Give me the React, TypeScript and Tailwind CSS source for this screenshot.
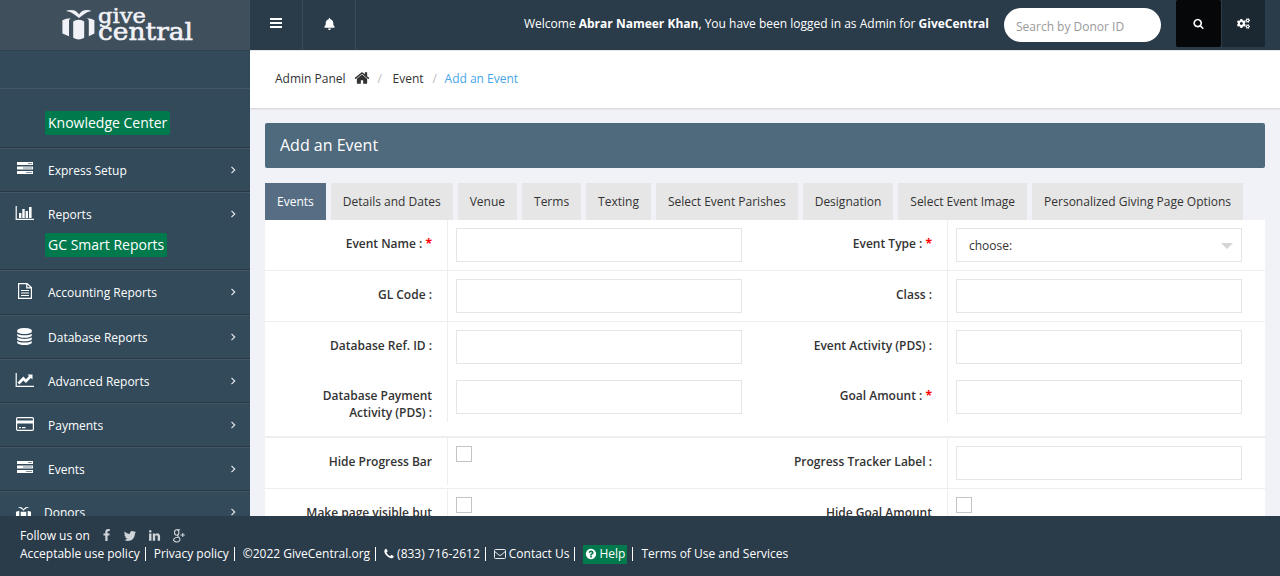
import React from "react";
import { FaCogs, FaBell } from "react-icons/fa";

const P = {
  search:
    "M1216 832q0-185-131.5-316.5t-316.5-131.5-316.5 131.5-131.5 316.5 131.5 316.5 316.5 131.5 316.5-131.5 131.5-316.5zm512 832q0 52-38 90t-90 38q-54 0-90-38l-343-342q-179 124-399 124-143 0-273.5-55.5t-225-150-150-225-55.5-273.5 55.5-273.5 150-225 225-150 273.5-55.5 273.5 55.5 225 150 150 225 55.5 273.5q0 220-124 399l343 343q37 37 37 90z",
  facebook:
    "M1343 12v264h-157q-86 0-116 36t-30 108v189h293l-39 296h-254v759h-306v-759h-255v-296h255v-218q0-186 104-288.5t277-102.5q147 0 228 12z",
  twitter:
    "M1684 408q-67 98-162 167 1 14 1 42 0 130-38 259.5t-115.5 248.5-184.5 210.5-258 146-323 54.5q-271 0-496-145 35 4 78 4 225 0 401-138-105-2-188-64.5t-114-159.5q33 5 61 5 43 0 85-11-112-23-185.500-111.500t-73.500-205.500v-4q68 38 146 41-66-44-105-115t-39-154q0-88 44-163 121 149 294.500 238.500t371.500 99.500q-8-38-8-74 0-134 94.500-228.500t228.500-94.500q140 0 236 102 109-21 205-78-37 115-142 178 93-10 186-50z",
  linkedin:
    "M477 625v991h-330v-991h330zm21-306q1 73-50.5 122t-135.5 49h-2q-82 0-132-49t-50-122q0-74 51.5-122.500t134.500-48.500 133 48.500 51 122.500zm1166 729v568h-329v-530q0-105-40.500-164.500t-126.500-59.500q-63 0-105.500 34.500t-63.500 85.500q-11 30-11 81v553h-329q2-399 2-647t-1-296l-1-48h329v144h-2q20-32 41-56t56.500-52 87-43.500 114.500-15.500q171 0 275 113.500t104 332.500z",
  phone:
    "M1600 1240q0 27-10 70.5t-21 68.5q-21 50-122 106-94 51-186 51-27 0-53-3.5t-57.5-12.5-47-14.5-55.5-20.5-49-18q-98-35-175-83-127-79-264-216t-216-264q-48-77-83-175-3-9-18-49t-20.5-55.5-14.5-47-12.5-57.5-3.5-53q0-92 51-186 56-101 106-122 25-11 68.5-21t70.5-10q14 0 21 3 18 6 53 76 11 19 30 54t35 63.5 31 53.5q3 4 17.5 25t21.5 35.5 7 28.5q0 20-28.5 50t-62 55-62 53-28.5 46q0 9 5 22.5t8.5 20.5 14 24 11.5 19q76 137 174 235t235 174q2 1 19 11.5t24 14 20.5 8.5 22.5 5q18 0 46-28.5t53-62 55-62 50-28.5q14 0 28.5 7t35.5 21.5 25 17.5q25 15 53.5 31t63.5 35 54 30q70 35 76 53 3 7 3 21z",
  home:
    "M1472 992v480q0 26-19 45t-45 19h-384v-384h-256v384h-384q-26 0-45-19t-19-45v-480q0-1 .5-3t.5-3l575-474 575 474q1 2 1 6zm223-69l-62 74q-8 9-21 11h-3q-13 0-21-7l-692-577-692 577q-12 8-24 7-13-2-21-11l-62-74q-8-10-7-23.5t11-21.5l719-599q32-26 76-26t76 26l244 204v-195q0-14 9-23t23-9h192q14 0 23 9t9 23v408l219 182q10 8 11 21.5t-7 23.5z",
  database:
    "M896 768q237 0 443-43t325-127v170q0 69-103 128t-280 93.5-385 34.5-385-34.5-280-93.5-103-128v-170q119 84 325 127t443 43zm0 768q237 0 443-43t325-127v170q0 69-103 128t-280 93.5-385 34.5-385-34.5-280-93.5-103-128v-170q119 84 325 127t443 43zm0-384q237 0 443-43t325-127v170q0 69-103 128t-280 93.5-385 34.5-385-34.5-280-93.5-103-128v-170q119 84 325 127t443 43zm0-1152q208 0 385 34.5t280 93.5 103 128v128q0 69-103 128t-280 93.5-385 34.5-385-34.5-280-93.5-103-128v-128q0-69 103-128t280-93.5 385-34.5z",
  question:
    "M1024 1376v-192q0-14-9-23t-23-9h-192q-14 0-23 9t-9 23v192q0 14 9 23t23 9h192q14 0 23-9t9-23zm256-672q0-88-55.5-163t-138.5-116-170-41q-243 0-371 213-15 24 8 42l132 100q7 6 19 6 16 0 25-12 53-68 86-92 34-24 86-24 48 0 85.5 26t37.5 59q0 38-20 61t-68 45q-63 28-115.5 86.5t-52.5 125.5v36q0 14 9 23t23 9h192q14 0 23-9t9-23q0-19 21.5-49.5t54.5-49.5q32-18 49-28.5t46-35 44.5-48 28-60.5 12.5-81zm384 192q0 209-103 385.5t-279.5 279.5-385.5 103-385.5-103-279.5-279.5-103-385.5 103-385.5 279.5-279.5 385.5-103 385.5 103 279.5 279.5 103 385.5z",
};

function Icon({ d, className }: { d: string; className: string }) {
  return (
    <svg viewBox="0 0 1792 1792" fill="currentColor" className={className}>
      <path d={d} />
    </svg>
  );
}

const TasksIcon = () => (
  <svg width="20" height="16" viewBox="0 0 20 16" fill="none">
    <path fill="#fff" d="M2 1h16v3H2zM2 5.500h16v3H2zM2 10h16v3H2z" />
    <path fill="#7f8f9c" d="M13 2h4v1h-4zM8 6.500h9v1H8zM11 11h6v1h-6z" />
  </svg>
);
const BarsIcon = () => (
  <svg width="20" height="16" viewBox="0 0 20 16" fill="#fff">
    <path d="M.6 1h1.200v12.800H19V15H.6zM4 8h2.400v5H4zM7.300 4h2.400v9H7.300zM10.600 6H13v7h-2.400zM14 2h2.600v11H14z" />
  </svg>
);
const FileIcon = () => (
  <svg width="20" height="18" viewBox="0 0 20 18" fill="none" stroke="#fff" strokeWidth="1.200">
    <path d="M3.600 1.600h8.400l4.400 4v10.800H3.600zM11.800 1.800v4h4.400M6 8.500h8M6 11h8M6 13.500h8" />
  </svg>
);
const LineIcon = () => (
  <svg width="20" height="16" viewBox="0 0 20 16">
    <path fill="#fff" d="M.6 1h1.200v12.800H19V15H.6zM12.500 2.500h5v5l-1.600-1.600-5 5-2.500-2.500-4 4-1.900-1.900 5.900-5.900L10.900 7.200l3.100-3.100z" />
  </svg>
);
const CardIcon = () => (
  <svg width="20" height="16" viewBox="0 0 20 16" fill="none">
    <rect x="1.600" y="1.600" width="16.800" height="12.800" rx="1.200" stroke="#fff" strokeWidth="1.200" />
    <path fill="#fff" d="M2 4.500h16v3H2zM4 11h2v1.200H4zM7 11h3.500v1.200H7z" />
  </svg>
);
const GiftIcon = () => (
  <svg width="17" height="16" viewBox="0 0 34 34" fill="#fff">
    <path d="M5 3q8-3 12 4 4-7 12-4-7 1-12 7Q12 4 5 3zM1 12l7-2v20l-7-3zM26 10l7 2v15l-7 3zM11 12h12v20q-6 3-12 0z" />
  </svg>
);

function Logo() {
  return (
    <svg width="138" height="44" viewBox="0 -4 138 44" fill="#f1f2f7">
      <path d="M4 5Q7 3.600 11.500 4.200 15 4.800 17 8.600 19 4.800 22.500 4.200 27 3.600 29.500 5 25.500 5.400 22 8.200L17 12 12 8.200Q8.500 5.400 4 5z" />
      <path d="M.4 14.200q3.500-2 8.400-2-1.600.8-1.800 2.200v15.800L.4 27.400zM24.800 12.200q4.700 0 7.600 2v13.200l-5.600 2.800V14.400q-.4-1.400-2-2.200zM11.200 15.400q1.800-1.600 5.500-1.600t5.500 1.600v16.400q-5.500 3.400-11 0z" />
      <text x="36" y="17" fontFamily="DejaVu Serif" fontSize="20.500" textLength="48" lengthAdjust="spacingAndGlyphs" stroke="#f1f2f7" strokeWidth=".5">give</text>
      <text x="36" y="33.500" fontFamily="DejaVu Serif" fontSize="25" textLength="95" lengthAdjust="spacingAndGlyphs" stroke="#f1f2f7" strokeWidth=".6">central</text>
    </svg>
  );
}

function NavItem({ icon, label, height, children, tight = false }: { icon: React.ReactNode; label: string; height: string; children?: React.ReactNode; tight?: boolean }) {
  return (
    <div className={`shrink-0 border-b border-[#273746] border-t border-t-[#435766] ${height}`}>
      <div className={`flex items-center pr-[13px] pl-[15px] ${tight ? "h-[40px]" : "h-[42px]"}`}>
        <span className={`flex h-[22px] shrink-0 items-center pb-[2px] ${tight ? "w-[29px]" : "w-[33px]"}`}>{icon}</span>
        <span className="flex-1 pt-[2px] text-white">{label}</span>
        <svg width="7" height="10" viewBox="0 0 7 10" fill="none" stroke="#e3e7ea" strokeWidth="1.200">
          <path d="M1.500 1.800L4.700 5 1.500 8.200" />
        </svg>
      </div>
      {children}
    </div>
  );
}

function Sidebar() {
  return (
    <aside className="flex w-[250px] shrink-0 flex-col overflow-hidden bg-[#324a5a]">
      <div className="flex h-[50px] shrink-0 justify-center bg-[#3f4f5b] pt-[2px] pl-[11px]">
        <Logo />
      </div>
      <div className="h-[39px] shrink-0 border-t border-b border-t-[#2d4150] border-b-[#435766]" />
      <div className="h-[59px] shrink-0 border-b border-[#273746] pt-[22px] pl-[45px]">
        <span className="inline-block h-6 rounded-[2px] bg-[#007a4d] px-[3px] text-sm leading-6 text-white">Knowledge Center</span>
      </div>
      <NavItem icon={<TasksIcon />} label="Express Setup" height="h-[44px]" />
      <NavItem icon={<BarsIcon />} label="Reports" height="h-[78px]">
        <div className="-mt-[2px] pl-[45px]">
          <span className="inline-block h-6 rounded-[2px] bg-[#007a4d] px-[3px] text-sm leading-6 text-white">GC Smart Reports</span>
        </div>
      </NavItem>
      <NavItem icon={<FileIcon />} label="Accounting Reports" height="h-[45px]" />
      <NavItem icon={<Icon d={P.database} className="ml-[1px] size-[17px] text-white" />} label="Database Reports" height="h-[44px]" />
      <NavItem icon={<LineIcon />} label="Advanced Reports" height="h-[44px]" />
      <NavItem icon={<CardIcon />} label="Payments" height="h-[44px]" />
      <NavItem icon={<TasksIcon />} label="Events" height="h-[44px]" />
      <NavItem icon={<span className="pt-[5px]"><GiftIcon /></span>} label="Donors" height="h-[44px]" tight />
    </aside>
  );
}

function TopBar() {
  return (
    <header className="flex h-[50px] shrink-0 bg-[#2a3b4a] text-white">
      <div className="flex w-[53px] justify-center border-r border-[#3b4c5b] pt-[18px]">
        <svg width="12" height="10" viewBox="0 0 12 10" fill="#fff">
          <path d="M0 0h12v2H0zM0 4h12v2H0zM0 8h12v2H0z" />
        </svg>
      </div>
      <div className="flex w-[53px] justify-center border-r border-[#3b4c5b] pt-[18px]">
        <FaBell className="h-[12px] w-[11px]" />
      </div>
      <div className="flex-1 pt-[16px] pr-[15px] text-right whitespace-nowrap">
        Welcome <b>Abrar Nameer Khan</b>, You have been logged in as Admin for <b>GiveCentral</b>
      </div>
      <input placeholder="Search by Donor ID" className="mt-2 mr-[15px] h-[34px] w-[157px] rounded-full bg-white pt-[2px] pl-3 text-xs placeholder:text-[#999]" />
      <div className="flex h-[47px] w-[45px] items-center justify-center rounded-[2px] bg-[#050708]">
        <Icon d={P.search} className="size-[11px]" />
      </div>
      <div className="mr-[15px] flex h-[47px] w-[44px] items-center justify-center border-l border-[#2a3b4a] bg-[#1b2831]">
        <FaCogs className="size-[13px]" />
      </div>
    </header>
  );
}

function Label({ children, required = false, className = "h-full" }: { children: React.ReactNode; required?: boolean; className?: string }) {
  return (
    <div className={`w-[183px] shrink-0 border-r border-[#eee] pt-[15px] pr-[15px] pl-[40px] text-right leading-[17px] font-semibold text-[#333] ${className}`}>
      {children}
      {required && <span className="font-bold text-[#f00]"> *</span>}
    </div>
  );
}
const Field = ({ children }: { children?: React.ReactNode }) => (
  <div className="mt-2 ml-2 flex h-[34px] w-[286px] items-center border border-[#e5e5e5] bg-white">{children}</div>
);
const Check = () => <div className="mt-2 ml-2 size-4 border border-[#c4c4c4] bg-white" />;
const Half = ({ children }: { children: React.ReactNode }) => <div className="flex h-full w-[500px] items-start">{children}</div>;

const tabs = ["Events", "Details and Dates", "Venue", "Terms", "Texting", "Select Event Parishes", "Designation", "Select Event Image", "Personalized Giving Page Options"];

function EventForm() {
  return (
    <section className="flex min-h-0 flex-1 flex-col overflow-hidden bg-white">
      <div className="flex h-[51px] shrink-0 border-b border-[#eee]">
        <Half><Label required>Event Name :</Label><Field /></Half>
        <Half>
          <Label required>Event Type :</Label>
          <Field>
            <span className="flex-1 pt-[2px] pl-3 text-[#333]">choose:</span>
            <svg width="12" height="6" viewBox="0 0 12 6" fill="#d5d5d5" className="mt-px mr-2"><path d="M0 0h12L6 6z" /></svg>
          </Field>
        </Half>
      </div>
      <div className="flex h-[51px] shrink-0 border-b border-[#eee]">
        <Half><Label>GL Code :</Label><Field /></Half>
        <Half><Label>Class :</Label><Field /></Half>
      </div>
      <div className="flex h-[50px] shrink-0">
        <Half><Label>Database Ref. ID :</Label><Field /></Half>
        <Half><Label className="h-full !pl-0">Event Activity (PDS) :</Label><Field /></Half>
      </div>
      <div className="flex h-[66px] shrink-0 border-b-2 border-[#eee]">
        <Half><Label className="h-[50px]">Database Payment Activity (PDS) :</Label><Field /></Half>
        <Half><Label required className="h-[50px]">Goal Amount :</Label><Field /></Half>
      </div>
      <div className="flex h-[51px] shrink-0 border-b border-[#eee]">
        <Half><Label className="h-[47px]">Hide Progress Bar</Label><Check /></Half>
        <Half><Label className="h-full !pl-0">Progress Tracker Label :</Label><Field /></Half>
      </div>
      <div className="flex h-[51px] shrink-0">
        <Half><Label>Make page visible but</Label><Check /></Half>
        <Half><Label>Hide Goal Amount</Label><Check /></Half>
      </div>
    </section>
  );
}

const Bar = () => <span className="h-[14px] w-px bg-white" />;

function Footer() {
  return (
    <footer className="h-[60px] shrink-0 bg-[#2a3b4a] pt-[11px] pl-5 leading-[18px] whitespace-nowrap text-white">
      <div className="flex h-[18px] items-center">
        <span className="w-[80px]">Follow us on</span>
        <span className="flex items-center pb-px text-[#d0d5d9]">
          <Icon d={P.facebook} className="size-[13px]" />
          <Icon d={P.twitter} className="ml-[10px] size-[14px]" />
          <Icon d={P.linkedin} className="ml-[11px] size-[13px]" />
          <svg width="12" height="14" viewBox="0 0 12 14" fill="none" stroke="currentColor" strokeWidth="1.100" className="ml-[12px]">
            <ellipse cx="3.700" cy="3.500" rx="2.200" ry="2.700" />
            <path d="M4 .8h3.200M5 5.800c-1 1.200.2 1.600 1.200 2.700C8 11 6.200 13 3.700 13S0 11.300 1 9.800s3.200-1.500 4.500-1.500M7.500 6h4.300M9.700 4v4" />
          </svg>
        </span>
      </div>
      <div className="flex h-[18px] items-center">
        <span className="mr-[5px]">Acceptable use policy</span><Bar />
        <span className="mr-[5px] ml-[8px]">Privacy policy</span><Bar />
        <span className="mr-[5px] ml-[8px]">©2022 GiveCentral.org</span><Bar />
        <Icon d={P.phone} className="ml-[7px] size-[12px]" />
        <span className="mr-[5px] ml-[2px]">(833) 716-2612</span><Bar />
        <svg width="12" height="10" viewBox="0 0 12 10" fill="none" stroke="#fff" strokeWidth=".9" className="ml-[8px]">
          <rect x=".5" y=".5" width="11" height="9" rx="1" />
          <path d="M.8 2.500Q5 6.500 6 6.500t5.200-4" />
        </svg>
        <span className="mr-[5px] ml-[3px]">Contact Us</span><Bar />
        <span className="mr-[5px] ml-[8px] flex h-[19px] items-center bg-[#007a4d] px-[2px]">
          <Icon d={P.question} className="mr-[2px] size-[12px]" />Help
        </span><Bar />
        <span className="ml-[8px]">Terms of Use and Services</span>
      </div>
    </footer>
  );
}

export default function App() {
  return (
    <div className="flex h-[576px] w-[1280px] flex-col overflow-hidden bg-[#f1f2f7] font-['Open_Sans','Noto_Sans',sans-serif] text-xs">
      <div className="flex min-h-0 flex-1">
        <Sidebar />
        <main className="flex min-w-0 flex-1 flex-col">
          <TopBar />
          <nav className="flex h-[59px] shrink-0 items-center border-t border-b border-t-[#e4e6e8] border-b-[#d8dadd] bg-white pb-[1px] pl-[25px] text-[#333] shadow-[0_1px_1px_rgba(0,0,0,0.04)]">
            <span>Admin Panel</span>
            <Icon d={P.home} className="mr-[8px] mb-[3px] ml-[8px] size-[16px]" />
            <span className="w-[15px] text-[#bbb]">/</span>
            <span className="w-[40px]">Event</span>
            <span className="w-[12px] text-[#bbb]">/</span>
            <span className="text-[#46a6e8]">Add an Event</span>
          </nav>
          <div className="flex min-h-0 flex-1 flex-col px-[15px] pt-[14px]">
            <h1 className="mb-[15px] h-[45px] shrink-0 rounded-[2px] bg-[#4f697d] pl-[15px] text-base leading-[44px] text-white">Add an Event</h1>
            <div className="flex h-[37px] shrink-0 gap-[5px] whitespace-nowrap">
              {tabs.map((t, i) => (
                <div key={t} className={`px-3 leading-[37px] ${i === 0 ? "bg-[#566d84] text-white" : "bg-[#e6e6e6] text-[#333]"}`}>{t}</div>
              ))}
            </div>
            <EventForm />
          </div>
        </main>
      </div>
      <Footer />
    </div>
  );
}
